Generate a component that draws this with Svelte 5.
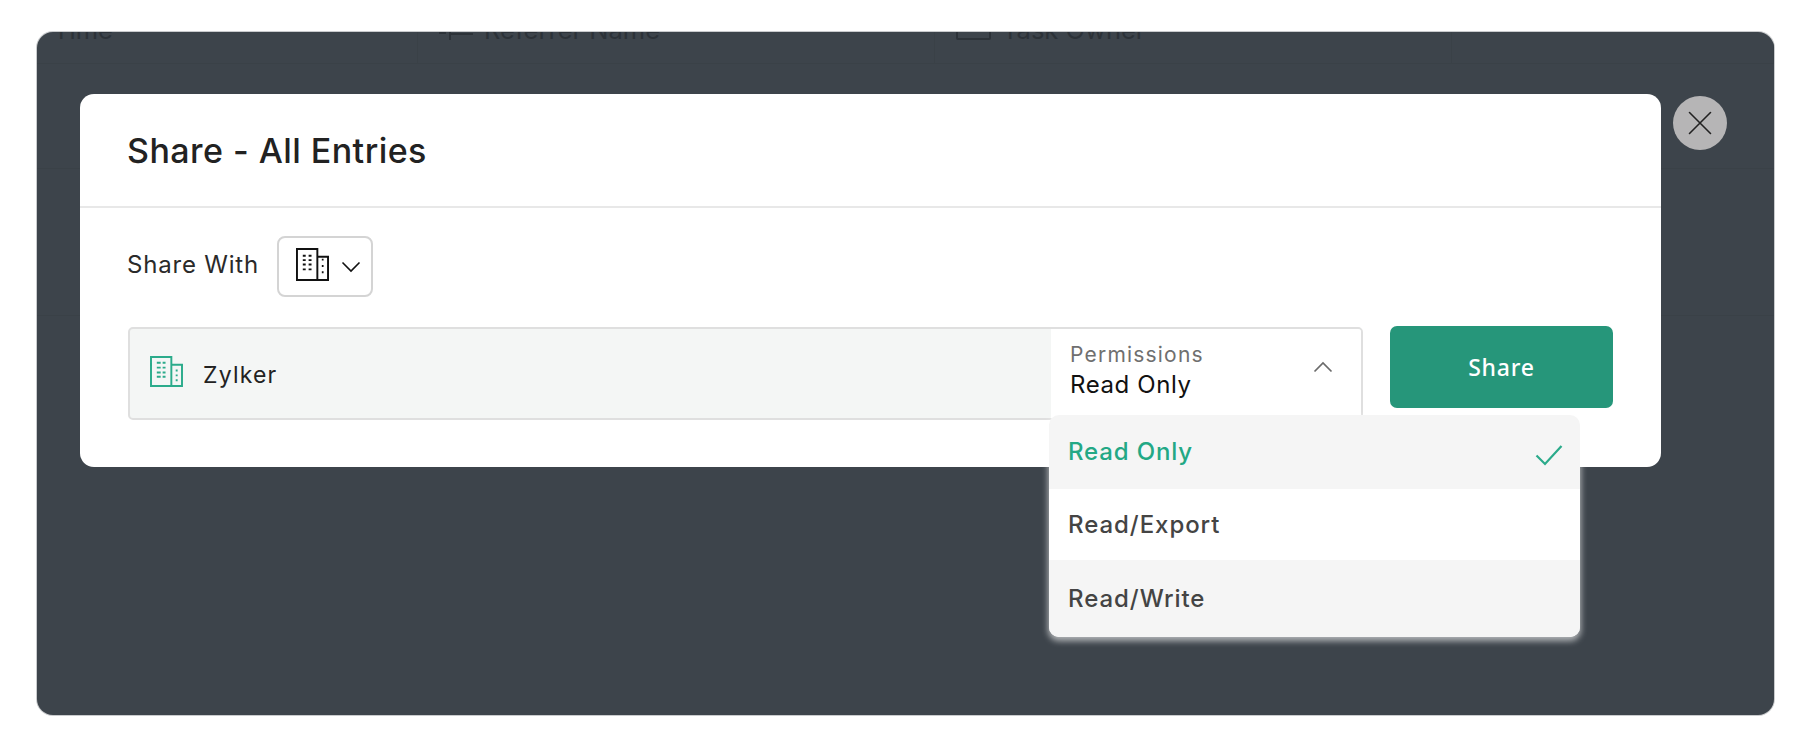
<script>
  const options = [
    { label: 'Read Only', selected: true },
    { label: 'Read/Export' },
    { label: 'Read/Write', shaded: true }
  ];
</script>

<div class="page">
  <div class="frame">
    <div class="table">
      <div class="thead">
        <div class="th first"><span class="clip">Time</span></div>
        <div class="th second">
          <svg class="ref" viewBox="0 0 34 20" width="34" height="20"><path d="M0 13h7M11 4v18M11 14h23" fill="none" stroke="#2c3238" stroke-width="2"/></svg>
          <span class="clip">Referrer Name</span>
        </div>
        <div class="th third">
          <span class="box"></span>
          <span class="clip">Task Owner</span>
        </div>
        <div class="th"></div>
      </div>
      <div class="tspacer"></div>
      <div class="tspacer tall"></div>
    </div>

    <div class="overlay">
      <div class="modal">
        <header class="head"><h1>Share - All Entries</h1></header>
        <div class="body">
          <div class="share-with">
            <span class="lbl">Share With</span>
            <button class="scope" aria-label="Organization">
              <svg class="scope-icon" viewBox="0 0 34 34" width="33" height="33" fill="none" stroke="#111" stroke-width="2">
                <path d="M1 1h21v32H1zM22 9h11v24H22z"/>
                <path d="M7 8h3M13 8h3M7 12.500h3M13 12.500h3M7 17h3M13 17h3M7 22h3M13 22h3" stroke-width="2"/>
                <path d="M27.500 11v2M27.500 17.500v2M27.500 24v2" stroke-width="1.800"/>
              </svg>
              <svg viewBox="0 0 20 12" width="20" height="12" fill="none" stroke="#111" stroke-width="1.600"><path d="M1.500 1.500 10 10l8.500-8.500"/></svg>
            </button>
          </div>
          <div class="share-row">
            <div class="entry">
              <div class="org">
                <svg class="org-icon" viewBox="0 0 34 32" width="33" height="31" fill="none" stroke="#2bab8b" stroke-width="2">
                  <path d="M1 1h21v30H1zM22 9h11v22H22z"/>
                  <path d="M7 7h4M13 7h3M7 12h4M13 12h3M7 17h4M13 17h3M7 21.500h4M13 21.500h3" stroke-width="2"/>
                  <path d="M27.500 14v2M27.500 19v2M27.500 24v2" stroke-width="2"/>
                </svg>
                <span class="name">Zylker</span>
              </div>
              <div class="perm">
                <div class="perm-text">
                  <span class="perm-label">Permissions</span>
                  <span class="perm-value">Read Only</span>
                </div>
                <svg viewBox="0 0 20 12" width="20" height="12" fill="none" stroke="#6b6b6b" stroke-width="1.700"><path d="M1.500 10.500 10 2l8.500 8.500"/></svg>
              </div>
            </div>
            <button class="share-btn">Share</button>
          </div>
        </div>
        <ul class="menu">
          {#each options as o}
            <li class:selected={o.selected} class:shaded={o.shaded}>
              <span>{o.label}</span>
              {#if o.selected}
                <svg viewBox="0 0 28 22" width="28" height="22" fill="none" stroke="#2bab8b" stroke-width="2.200"><path d="M1.500 11.500 10 20 26.500 2"/></svg>
              {/if}
            </li>
          {/each}
        </ul>
      </div>
      <button class="close" aria-label="Close">
        <svg viewBox="0 0 24 24" width="24" height="24" fill="none" stroke="#222" stroke-width="1.600" stroke-linecap="round"><path d="M1.500 1.500l21 21M22.500 1.500l-21 21"/></svg>
      </button>
    </div>
  </div>
</div>

<style>
  :global(body) {
    margin: 0;
    background: #fff;
    font-family: Inter, "Liberation Sans", sans-serif;
  }
  .page {
    width: 1811px;
    height: 748px;
    padding: 32px 37px 33px;
    box-sizing: border-box;
  }
  .frame {
    position: relative;
    height: 100%;
    border-radius: 16px;
    overflow: hidden;
    background: #3d444b;
    box-shadow: 0 0 0 1px #c9cbcd;
  }
  .table {
    display: flex;
    flex-direction: column;
    margin-top: -22px;
  }
  .thead {
    display: grid;
    grid-template-columns: 381px 517px 517px 1fr;
    height: 53px;
    border-bottom: 1px solid #3a4147;
  }
  .th {
    display: flex;
    align-items: flex-start;
    gap: 11px;
    padding: 0 16px;
    font-size: 25.500px;
    line-height: 26px;
    color: #2c3238;
    border-right: 1px solid #3a4147;
    height: 53px;
    box-sizing: border-box;
  }
  .clip { margin-top: 7px; }
  .second, .third { padding-left: 21px; }
  .ref { margin-top: 10px; flex: none; }
  .box {
    width: 35px;
    height: 30px;
    border: 2px solid #2c3238;
    border-radius: 2px;
    box-sizing: border-box;
    flex: none;
  }
  .tspacer { height: 104px; border-bottom: 1px solid #3a4147; }
  .tspacer.tall { height: 146px; }
  .overlay {
    position: absolute;
    inset: 0;
  }
  .modal {
    position: absolute;
    left: 43px;
    top: 62px;
    width: 1581px;
    height: 373px;
    background: #fff;
    border-radius: 14px;
  }
  .head {
    height: 114px;
    padding: 0 47px;
    display: flex;
    align-items: center;
    border-bottom: 2px solid #e8e8e8;
    box-sizing: border-box;
  }
  h1 {
    margin: 0;
    font-size: 34px;
    font-weight: 500;
    color: #222;
    letter-spacing: 0.45px;
  }
  .body {
    padding: 28px 48px 0;
  }
  .share-with {
    display: flex;
    align-items: center;
    gap: 18px;
  }
  .lbl {
    font-size: 24px;
    color: #2a2a2a;
    letter-spacing: 0.8px;
    margin: 0 0 4px -1px;
  }
  .scope {
    width: 96px;
    height: 61px;
    display: flex;
    align-items: center;
    gap: 12px;
    border: 2px solid #d4d4d4;
    border-radius: 8px;
    background: #fff;
    padding: 0 0 0 17px;
  }
  .scope-icon { margin-bottom: 5px; }
  .share-row {
    display: flex;
    gap: 27px;
    margin-top: 30px;
    align-items: flex-start;
  }
  .entry {
    flex: none;
    width: 1235px;
    height: 93px;
    box-sizing: border-box;
    display: flex;
    border: 2px solid #dfdfdf;
    border-radius: 5px;
    background: #f4f6f5;
  }
  .org {
    flex: 1;
    display: flex;
    align-items: center;
    gap: 20px;
    padding-left: 20px;
  }
  .org-icon { margin-bottom: 5px; }
  .name {
    font-size: 23px;
    letter-spacing: 1.2px;
    color: #222;
    margin-top: 2px;
  }
  .perm {
    width: 310px;
    background: #fff;
    display: flex;
    align-items: center;
    justify-content: space-between;
    padding: 0 28px 4px 19px;
    box-sizing: border-box;
    border-radius: 0 3px 3px 0;
  }
  .perm-text {
    display: flex;
    flex-direction: column;
    gap: 1px;
    margin-top: -2px;
  }
  .perm-label {
    font-size: 21px;
    color: #6f6f6f;
    letter-spacing: 1.2px;
    line-height: 28px;
  }
  .perm-value {
    font-size: 24px;
    color: #111;
    letter-spacing: 0.6px;
    line-height: 30px;
  }
  .perm svg { margin-top: -10px; }
  .share-btn {
    width: 225px;
    height: 82px;
    margin-top: -1px;
    border: 0;
    border-radius: 7px;
    background: #26967a;
    color: #fff;
    font-family: "Noto Sans", "Open Sans", sans-serif;
    font-size: 23px;
    font-weight: 500;
    letter-spacing: 0.8px;
    padding: 0;
  }
  .menu {
    position: absolute;
    left: 969px;
    top: 321px;
    width: 531px;
    height: 222px;
    margin: 0;
    padding: 0;
    list-style: none;
    background: #fff;
    border-radius: 10px;
    box-shadow: 0 3px 6px 1px rgba(255, 255, 255, 0.6);
    overflow: hidden;
    display: grid;
    grid-template-rows: 74px 71px 77px;
  }
  .menu li {
    display: flex;
    align-items: center;
    justify-content: space-between;
    padding: 0 17px 0 19px;
    font-size: 24px;
    font-weight: 500;
    color: #444;
    letter-spacing: 0.95px;
  }
  .menu li.selected {
    background: #f5f5f5;
    color: #23a885;
    letter-spacing: 0.85px;
    padding-bottom: 2px;
  }
  .menu li.selected svg { margin-top: 8px; }
  .menu li.shaded { background: #f5f5f5; }
  .close {
    position: absolute;
    left: 1636px;
    top: 64px;
    width: 54px;
    height: 54px;
    padding: 0;
    border: 0;
    border-radius: 50%;
    background: #b6b5b6;
    display: flex;
    align-items: center;
    justify-content: center;
  }
</style>
